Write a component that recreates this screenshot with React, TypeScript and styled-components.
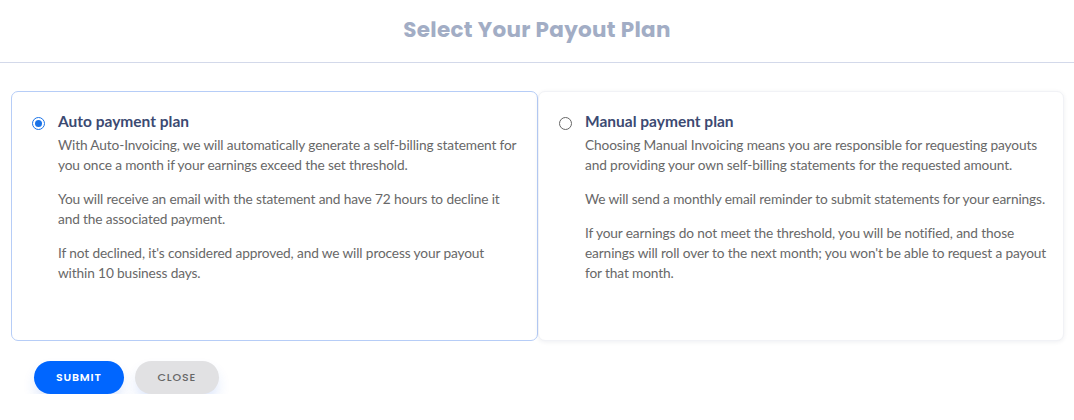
import React, { useState } from "react";
import styled, { createGlobalStyle } from "styled-components";

const Global = createGlobalStyle`
  html, body { margin: 0; padding: 0; background: #fff; }
  body { font-family: "Source Sans Pro", "Lato", "Noto Sans", sans-serif; }
  * { box-sizing: border-box; }
`;

const Page = styled.div`
  width: 1074px;
  display: flex;
  flex-direction: column;
`;

const Header = styled.header`
  height: 63px;
  border-bottom: 1px solid #d3d9ea;
  display: flex;
  align-items: center;
  justify-content: center;
  padding-bottom: 4px;
`;

const Title = styled.h1`
  margin: 0;
  font-family: "Poppins", "Open Sans", sans-serif;
  font-weight: 700;
  font-size: 21.5px;
  letter-spacing: 0.3px;
  color: #a2adc5;
`;

const Body = styled.div`
  padding: 28px 10px 0 11px;
  display: flex;
  flex-direction: column;
`;

const Cards = styled.div`
  display: grid;
  grid-template-columns: 527px 526px;
`;

const Card = styled.label<{ $active: boolean }>`
  height: 250px;
  display: flex;
  gap: 13px;
  padding: 19px 8px 0 20px;
  border-radius: 7px;
  background: #fff;
  cursor: pointer;
  border: 1px solid ${(p) => (p.$active ? "#b6cdf7" : "#f1f2f6")};
  box-shadow: ${(p) =>
    p.$active ? "none" : "0 1px 4px rgba(40, 50, 90, 0.08)"};
`;

const Radio = styled.span<{ $checked: boolean }>`
  flex: none;
  width: 13px;
  height: 13px;
  margin-top: 6px;
  border-radius: 50%;
  border: 1px solid ${(p) => (p.$checked ? "#1a73e8" : "#666")};
  display: flex;
  align-items: center;
  justify-content: center;
  &::after {
    content: "";
    width: 7px;
    height: 7px;
    border-radius: 50%;
    background: ${(p) => (p.$checked ? "#1a73e8" : "transparent")};
  }
`;

const Content = styled.div`
  display: flex;
  flex-direction: column;
  max-width: 462px;
`;

const PlanTitle = styled.div`
  font-size: 15.5px;
  font-weight: 700;
  line-height: 20px;
  color: #3c4a72;
  margin-bottom: 4px;
`;

const Para = styled.p`
  margin: 0 0 14px;
  font-size: 13.7px;
  line-height: 20px;
  letter-spacing: -0.13px;
  color: #686868;
`;

const Actions = styled.div`
  display: flex;
  gap: 11px;
  padding: 20px 0 0 23px;
`;

const Button = styled.button<{ $primary?: boolean }>`
  height: 33px;
  border: none;
  border-radius: 17px;
  padding: 0 ${(p) => (p.$primary ? "22px" : "23px")};
  font-family: "Poppins", "Open Sans", sans-serif;
  font-size: 11px;
  font-weight: ${(p) => (p.$primary ? 600 : 500)};
  letter-spacing: 0.8px;
  text-transform: uppercase;
  background: ${(p) => (p.$primary ? "#0066ff" : "#e1e1e3")};
  color: ${(p) => (p.$primary ? "#fff" : "#666")};
  box-shadow: 0 8px 14px -2px rgba(40, 100, 230, 0.18);
  cursor: pointer;
`;

const plans = [
  {
    id: "auto",
    title: "Auto payment plan",
    paras: [
      "With Auto-Invoicing, we will automatically generate a self-billing statement for you once a month if your earnings exceed the set threshold.",
      "You will receive an email with the statement and have 72 hours to decline it and the associated payment.",
      "If not declined, it's considered approved, and we will process your payout within 10 business days.",
    ],
  },
  {
    id: "manual",
    title: "Manual payment plan",
    paras: [
      "Choosing Manual Invoicing means you are responsible for requesting payouts and providing your own self-billing statements for the requested amount.",
      "We will send a monthly email reminder to submit statements for your earnings.",
      "If your earnings do not meet the threshold, you will be notified, and those earnings will roll over to the next month; you won't be able to request a payout for that month.",
    ],
  },
];

export default function App() {
  const [selected, setSelected] = useState("auto");
  return (
    <Page>
      <Global />
      <Header>
        <Title>Select Your Payout Plan</Title>
      </Header>
      <Body>
        <Cards>
          {plans.map((p) => (
            <Card
              key={p.id}
              $active={selected === p.id}
              onClick={() => setSelected(p.id)}
            >
              <Radio $checked={selected === p.id} />
              <Content>
                <PlanTitle>{p.title}</PlanTitle>
                {p.paras.map((t, i) => (
                  <Para key={i}>{t}</Para>
                ))}
              </Content>
            </Card>
          ))}
        </Cards>
        <Actions>
          <Button $primary>Submit</Button>
          <Button>Close</Button>
        </Actions>
      </Body>
    </Page>
  );
}
